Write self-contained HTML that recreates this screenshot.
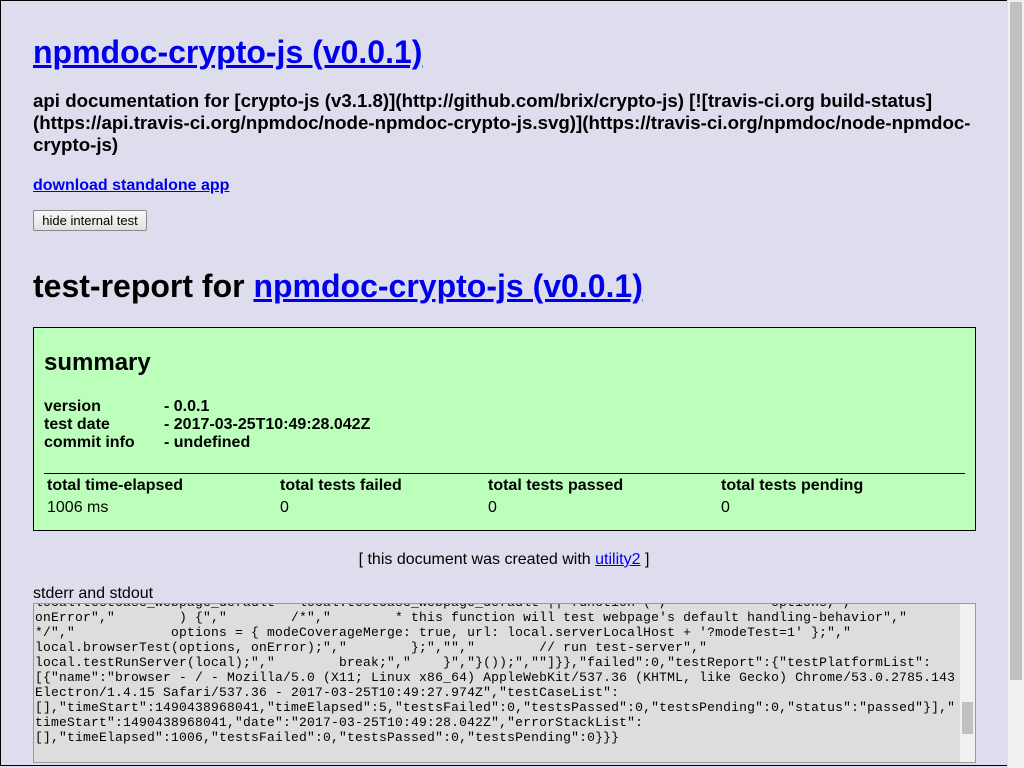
<!DOCTYPE html>
<html><head><style>
html,body{margin:0;padding:0;}
body{width:1024px;height:768px;overflow:hidden;background:#dddded;font-family:"Liberation Sans",sans-serif;position:relative;color:#000;}
.frame{position:absolute;left:0;top:0;width:1007px;height:766px;border:1px solid #000;border-right:none;box-sizing:border-box;}
.a{position:absolute;white-space:nowrap;}
a{color:#00e;text-decoration:underline;}
.sb{position:absolute;left:1008px;top:0;width:16px;height:768px;background:#f1f1f1;}
.th{position:absolute;left:1010px;top:2px;width:12px;height:678px;background:#c1c1c1;}
</style></head><body>
<div class="frame"></div>
<div class="a" style="left:33px;top:34px;font-size:32px;font-weight:bold;line-height:37px;"><a>npmdoc-crypto-js (v0.0.1)</a></div>
<div class="a" style="left:33px;top:90px;font-size:18.7px;font-weight:bold;line-height:22px;white-space:normal;width:945px;">api documentation for [crypto-js (v3.1.8)](http://github.com/brix/crypto-js) [![travis-ci.org build-status](https://api.travis-ci.org/npmdoc/node-npmdoc-crypto-js.svg)](https://travis-ci.org/npmdoc/node-npmdoc-crypto-js)</div>
<div class="a" style="left:33px;top:176px;font-size:16px;font-weight:bold;line-height:19px;"><a>download standalone app</a></div>
<div class="a" style="left:33px;top:210px;width:114px;height:21px;box-sizing:border-box;border:1px solid #888;border-radius:2px;background:linear-gradient(#fafafa,#e0e0e0);font-size:13px;text-align:center;line-height:19px;">hide internal test</div>
<div class="a" style="left:33px;top:268px;font-size:32px;font-weight:bold;line-height:37px;">test-report for <a>npmdoc-crypto-js (v0.0.1)</a></div>
<div class="a" style="left:33px;top:327px;width:943px;height:204px;box-sizing:border-box;border:1px solid #000;background:#bbffbb;">
 <div class="a" style="left:10px;top:21px;font-size:24px;font-weight:bold;line-height:28px;">summary</div>
 <div class="a" style="left:10px;top:70px;font-size:16px;font-weight:bold;line-height:18px;">version<br>test date<br>commit info</div>
 <div class="a" style="left:130px;top:70px;font-size:16px;font-weight:bold;line-height:18px;">- 0.0.1<br>- 2017-03-25T10:49:28.042Z<br>- undefined</div>
 <div class="a" style="left:10px;top:145px;width:921px;height:1px;background:#000;"></div>
 <div class="a" style="left:13px;top:149px;font-size:16px;font-weight:bold;line-height:18px;">total time-elapsed</div>
 <div class="a" style="left:246px;top:149px;font-size:16px;font-weight:bold;line-height:18px;">total tests failed</div>
 <div class="a" style="left:454px;top:149px;font-size:16px;font-weight:bold;line-height:18px;">total tests passed</div>
 <div class="a" style="left:687px;top:149px;font-size:16px;font-weight:bold;line-height:18px;">total tests pending</div>
 <div class="a" style="left:13px;top:171px;font-size:16px;line-height:18px;">1006 ms</div>
 <div class="a" style="left:246px;top:171px;font-size:16px;line-height:18px;">0</div>
 <div class="a" style="left:454px;top:171px;font-size:16px;line-height:18px;">0</div>
 <div class="a" style="left:687px;top:171px;font-size:16px;line-height:18px;">0</div>
</div>
<div class="a" style="left:0;width:1008px;text-align:center;top:551px;font-size:16px;line-height:18px;">[ this document was created with <a>utility2</a> ]</div>
<div class="a" style="left:33px;top:585px;font-size:16px;line-height:18px;">stderr and stdout</div>
<div class="a" style="left:33px;top:603px;width:943px;height:160px;box-sizing:border-box;border:1px solid #999;background:#dddddd;overflow:hidden;">
 <pre style="position:absolute;left:1px;top:-9px;margin:0;font-family:'Liberation Mono',monospace;font-size:13px;letter-spacing:0.2px;line-height:15px;">local.testcase_webpage_default = local.testcase_webpage_default || function (","            options,","
onError","        ) {","        /*","        * this function will test webpage's default handling-behavior","
*/","            options = { modeCoverageMerge: true, url: local.serverLocalHost + '?modeTest=1' };","
local.browserTest(options, onError);","        };","","        // run test-server","
local.testRunServer(local);","        break;","    }","}());",""]}},"failed":0,"testReport":{"testPlatformList":
[{"name":"browser - / - Mozilla/5.0 (X11; Linux x86_64) AppleWebKit/537.36 (KHTML, like Gecko) Chrome/53.0.2785.143
Electron/1.4.15 Safari/537.36 - 2017-03-25T10:49:27.974Z","testCaseList":
[],"timeStart":1490438968041,"timeElapsed":5,"testsFailed":0,"testsPassed":0,"testsPending":0,"status":"passed"}],"
timeStart":1490438968041,"date":"2017-03-25T10:49:28.042Z","errorStackList":
[],"timeElapsed":1006,"testsFailed":0,"testsPassed":0,"testsPending":0}}}</pre>
 <div class="a" style="right:0;top:0;width:15px;height:158px;background:#f1f1f1;"></div>
 <div class="a" style="right:2px;top:98px;width:11px;height:32px;background:#c1c1c1;"></div>
</div>
<div class="sb"></div><div class="th"></div>
</body></html>
